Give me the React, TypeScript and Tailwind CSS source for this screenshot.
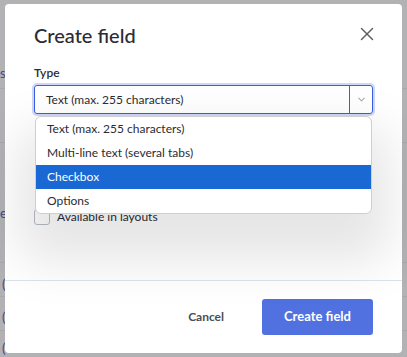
import { X, ChevronDown } from "lucide-react";

const OPTIONS = [
  "Text (max. 255 characters)",
  "Multi-line text (several tabs)",
  "Checkbox",
  "Options",
];

const SELECTED = "Checkbox";

function Backdrop() {
  // faint page content peeking out at the edges of the overlay
  return (
    <div className="absolute inset-0 bg-[#b2b2b5]">
      <div className="absolute left-0 top-[64px] text-[13px] text-[#3c4a8a]">se</div>
      <div className="absolute left-0 right-0 top-[88px] h-px bg-[#a8a8ab]" />
      <div className="absolute left-0 right-0 top-[142px] h-px bg-[#a8a8ab]" />
      <div className="absolute left-0 top-[204px] text-[13px] text-[#3c4a8a]">e</div>
      <div className="absolute left-0 right-0 top-[262px] h-px bg-[#a8a8ab]" />
      <div className="absolute left-0 right-0 top-[296px] h-px bg-[#a8a8ab]" />
      <div className="absolute left-0 right-0 top-[330px] h-px bg-[#a8a8ab]" />
      <div className="absolute left-[2px] top-[275px] text-[13px] text-[#3c4a8a]">(</div>
      <div className="absolute left-[2px] top-[308px] text-[13px] text-[#3c4a8a]">(</div>
      <div className="absolute left-[2px] top-[339px] text-[13px] text-[#3c4a8a]">(</div>
    </div>
  );
}

export default function App() {
  return (
    <div
      className="relative h-[357px] w-[407px] overflow-hidden"
      style={{ fontFamily: 'Lato, "Noto Sans", sans-serif' }}
    >
      <Backdrop />

      <div className="relative mx-[5px] mt-[4px] flex h-[349px] flex-col rounded-[4px] bg-white pl-[29px] pr-[29px]">
        <div className="flex items-center justify-between pt-[16px]">
          <h2 className="text-[20px] font-medium leading-[30px] text-[#2b2b33]">Create field</h2>
          <X className="mr-[-5px] mt-[-2px] h-[22px] w-[22px] text-[#5a5d63]" strokeWidth={1.6} />
        </div>

        <div className="pt-[15px]">
          <label className="block text-[12px] font-semibold leading-[16px] text-[#2b2b33]">Type</label>
          <div className="relative mt-[4px]">
            <div className="flex h-[29px] items-stretch rounded-[3px] border border-[#3d5ce0] text-[12px] text-[#2b2b33] shadow-[0_0_0_2px_rgba(110,140,240,0.35)]">
              <span className="flex flex-1 items-center px-[11px]">Text (max. 255 characters)</span>
              <span className="flex w-[23px] items-center justify-center border-l border-[#3d5ce0]">
                <ChevronDown className="h-[11px] w-[11px] text-[#a3a8b2]" strokeWidth={2.2} />
              </span>
            </div>

            <ul className="absolute left-[1px] right-[1px] top-[31px] z-10 overflow-hidden rounded-[6px] border border-[#cfcfd2] bg-white text-[12px] shadow-[0_30px_50px_18px_rgba(0,0,0,0.1)]">
              {OPTIONS.map((opt) => (
                <li
                  key={opt}
                  className={
                    opt === SELECTED
                      ? "flex h-[24px] items-center bg-[#1a68d3] px-[11px] text-white"
                      : "flex h-[24px] items-center px-[11px] text-[#2b2b33]"
                  }
                >
                  {opt}
                </li>
              ))}
            </ul>
          </div>

          <div className="mt-[94px] flex items-center gap-[7px]">
            <span className="h-[16px] w-[16px] rounded-[3px] border border-[#b8bcc4] bg-white" />
            <span className="text-[12px] text-[#2b2b33]">Available in layouts</span>
          </div>
        </div>

        <div className="mt-auto -mx-[29px] flex h-[73px] items-center justify-end gap-[38px] border-t border-[#dde3ea] px-[29px] pb-[1px]">
          <button type="button" className="text-[12px] font-bold text-[#4a4d55]">
            Cancel
          </button>
          <button
            type="button"
            className="h-[36px] w-[111px] rounded-[3px] bg-[#5271e0] text-[13px] font-bold text-white"
          >
            Create field
          </button>
        </div>
      </div>
    </div>
  );
}
